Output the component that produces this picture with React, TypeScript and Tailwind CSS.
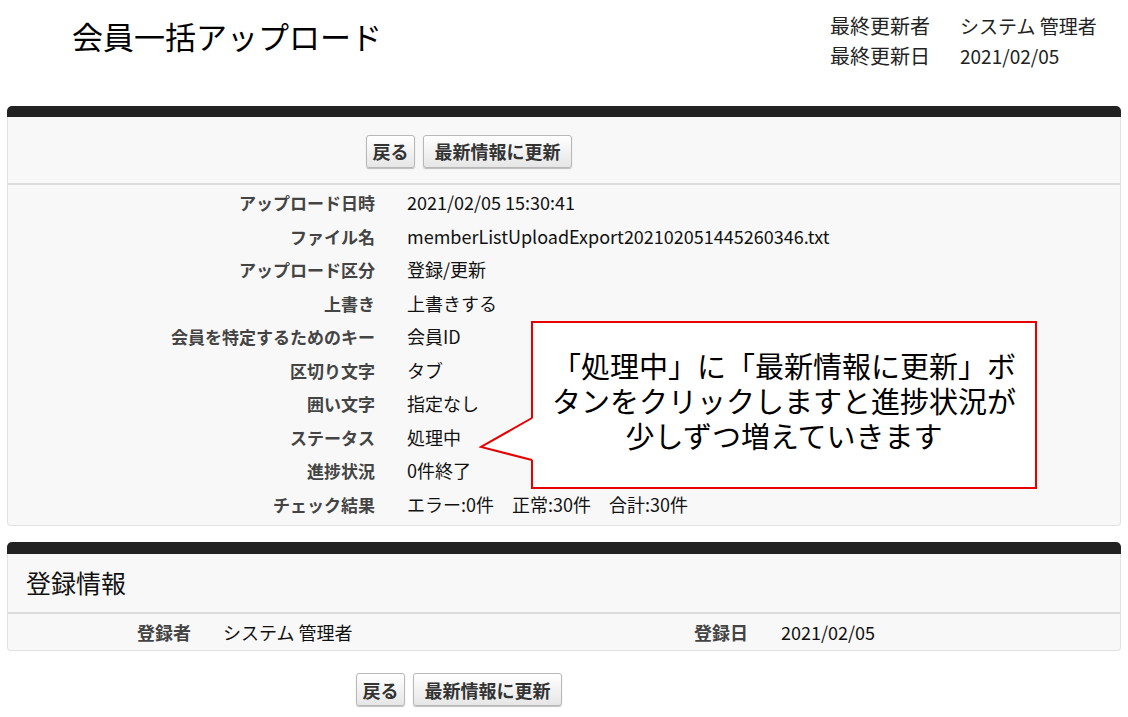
import React from "react";

const font = { fontFamily: '"Noto Sans CJK JP", "Noto Sans", sans-serif' };

const details: [string, string][] = [
  ["アップロード日時", "2021/02/05 15:30:41"],
  ["ファイル名", "memberListUploadExport202102051445260346.txt"],
  ["アップロード区分", "登録/更新"],
  ["上書き", "上書きする"],
  ["会員を特定するためのキー", "会員ID"],
  ["区切り文字", "タブ"],
  ["囲い文字", "指定なし"],
  ["ステータス", "処理中"],
  ["進捗状況", "0件終了"],
  ["チェック結果", "エラー:0件\u3000正常:30件\u3000合計:30件"],
];

const Btn = ({ label, w }: { label: string; w: string }) => (
  <button
    className={`${w} h-[33px] rounded-[3px] border border-[#b8b8b8] bg-gradient-to-b from-white to-[#e6e6e6] text-[18px] font-bold leading-none text-[#333] shadow-[0_1px_1px_rgba(0,0,0,0.25)]`}
  >
    {label}
  </button>
);

const Buttons = () => (
  <div className="flex gap-[8px]">
    <Btn label="戻る" w="w-[49px]" />
    <Btn label="最新情報に更新" w="w-[149px]" />
  </div>
);

export default function App() {
  return (
    <div className="relative h-[717px] w-[1128px] overflow-hidden bg-white text-black" style={font}>
      {/* header */}
      <div className="flex h-[106px] justify-between">
        <h1 className="pl-[72px] pt-[14px] text-[31px] font-normal leading-[44px]">会員一括アップロード</h1>
        <div className="w-[298px] pt-[11px] text-[20px] leading-[30px] text-[#222]">
          <div className="flex">
            <span className="w-[130px]">最終更新者</span>
            <span className="text-[19px]">システム 管理者</span>
          </div>
          <div className="flex">
            <span className="w-[130px]">最終更新日</span>
            <span className="text-[19px]">2021/02/05</span>
          </div>
        </div>
      </div>

      {/* upload panel */}
      <div className="mx-[7px]">
        <div className="h-[11px] rounded-t-[5px] bg-[#222]" />
        <div className="rounded-b-[4px] border-x border-b border-[#e2e2e2] bg-[#f8f8f8] pb-[4px]">
          <div className="flex h-[68px] items-center border-b-2 border-[#dcdcdc] pl-[358px] pt-[2px]">
            <Buttons />
          </div>
          <div className="pt-[1px]">
            {details.map(([k, v]) => (
              <div key={k} className="flex h-[33.5px] items-center">
                <div className="w-[367px] text-right text-[17px] font-bold text-[#444]">{k}</div>
                <div className="pl-[32px] text-[18px] text-[#111] whitespace-pre">{v}</div>
              </div>
            ))}
          </div>
        </div>
      </div>

      {/* registration panel */}
      <div className="mx-[7px] mt-[16px]">
        <div className="h-[12px] rounded-t-[5px] bg-[#222]" />
        <div className="rounded-b-[4px] border-x border-b border-[#e2e2e2] bg-[#f8f8f8]">
          <div className="flex h-[60px] items-center border-b-2 border-[#dcdcdc] pl-[18px]">
            <h2 className="text-[25px] font-normal text-[#111]">登録情報</h2>
          </div>
          <div className="flex h-[36px] items-center text-[18px]">
            <div className="w-[183px] text-right font-bold text-[#444]">登録者</div>
            <div className="w-[466px] pl-[32px] text-[#111]">システム 管理者</div>
            <div className="w-[91px] text-right font-bold text-[#444]">登録日</div>
            <div className="pl-[33px] text-[#111]">2021/02/05</div>
          </div>
        </div>
      </div>

      <div className="mt-[22px] pl-[356px]">
        <Buttons />
      </div>

      {/* callout */}
      <div className="absolute left-[531px] top-[321px] flex h-[168px] w-[506px] flex-col items-center justify-center border-2 border-[#e60000] bg-white pb-[10px] text-[29px] text-black">
        <div className="h-[35px] leading-[35px]">「処理中」に「最新情報に更新」ボ</div>
        <div className="h-[35px] leading-[35px]">タンをクリックしますと進捗状況が</div>
        <div className="h-[35px] leading-[35px]">少しずつ増えていきます</div>
      </div>
      <svg className="absolute left-[478px] top-[412px]" width="57" height="56" viewBox="0 0 57 56">
        <polygon points="55,6 3,35 55,48" fill="white" />
        <polyline points="54,6 3,35 54,48" fill="none" stroke="#e60000" strokeWidth="2" />
      </svg>
    </div>
  );
}
